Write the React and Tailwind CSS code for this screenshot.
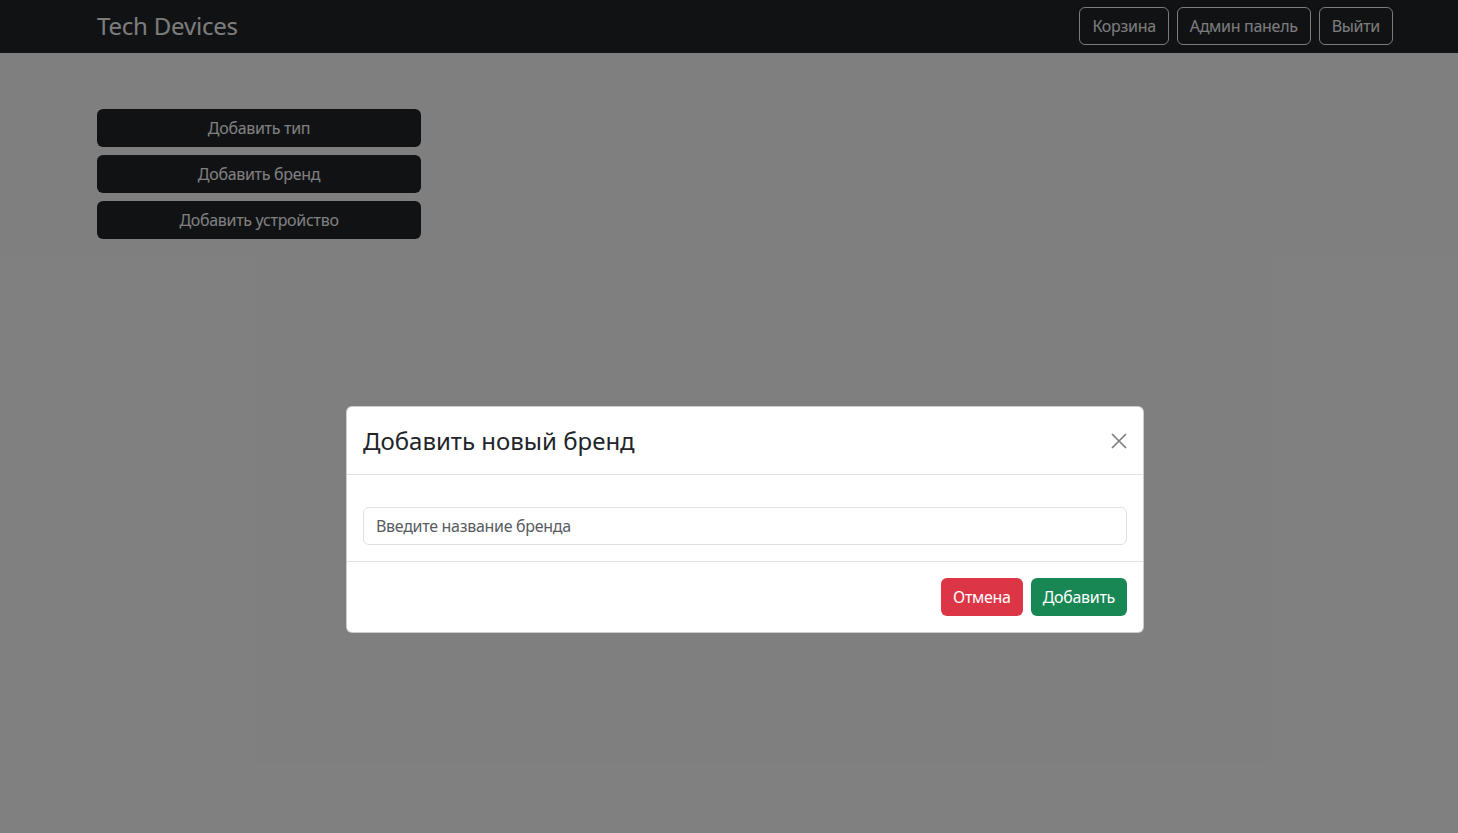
export default function App() {
  const font = { fontFamily: '"Noto Sans", "Open Sans", sans-serif' };
  return (
    <div className="relative min-h-[833px] bg-white" style={font}>
      <nav className="h-[53px] bg-[#212529] flex items-start justify-between pl-[97px] pr-[65px] pt-[7px]">
        <span className="text-[24px] leading-[38px] text-[#f8f9fa] tracking-[-0.2px]">Tech Devices</span>
        <div className="flex gap-2">
          <button className="h-[38px] px-3 rounded-md border border-[#f8f9fa] text-[#f8f9fa] text-base tracking-[-0.3px]">Корзина</button>
          <button className="h-[38px] px-3 rounded-md border border-[#f8f9fa] text-[#f8f9fa] text-base tracking-[-0.3px]">Админ панель</button>
          <button className="h-[38px] px-3 rounded-md border border-[#f8f9fa] text-[#f8f9fa] text-base tracking-[-0.3px]">Выйти</button>
        </div>
      </nav>

      <div className="pl-[97px] pt-[56px] flex flex-col gap-2 w-[421px]">
        <button className="h-[38px] rounded-md bg-[#212529] text-white text-base tracking-[-0.3px]">Добавить тип</button>
        <button className="h-[38px] rounded-md bg-[#212529] text-white text-base tracking-[-0.3px]">Добавить бренд</button>
        <button className="h-[38px] rounded-md bg-[#212529] text-white text-base tracking-[-0.3px]">Добавить устройство</button>
      </div>

      {/* backdrop */}
      <div className="absolute inset-0 bg-black/50" />

      {/* modal */}
      <div className="absolute left-[346px] top-[406px] w-[798px] bg-white rounded-md border border-black/20 text-[#212529]">
        <div className="h-[68px] flex items-center justify-between px-4 border-b border-[#dee2e6]">
          <h5 className="text-[24px] leading-none">Добавить новый бренд</h5>
          <button className="w-4 h-4 opacity-50">
            <svg viewBox="0 0 16 16" width="16" height="16" fill="none" stroke="#000" strokeWidth="1.7">
              <path d="M1 1L15 15M15 1L1 15" />
            </svg>
          </button>
        </div>
        <div className="px-4 pt-8 pb-4">
          <input
            className="w-full h-[38px] px-3 rounded-md border border-[#dee2e6] text-base tracking-[-0.3px] placeholder:text-[#595c5f] outline-none"
            placeholder="Введите название бренда"
          />
        </div>
        <div className="border-t border-[#dee2e6] flex items-center justify-end gap-2 p-4">
          <button className="h-[38px] px-3 rounded-md bg-[#dc3545] text-white text-base tracking-[-0.3px]">Отмена</button>
          <button className="h-[38px] px-3 rounded-md bg-[#198754] text-white text-base tracking-[-0.3px]">Добавить</button>
        </div>
      </div>
    </div>
  );
}
